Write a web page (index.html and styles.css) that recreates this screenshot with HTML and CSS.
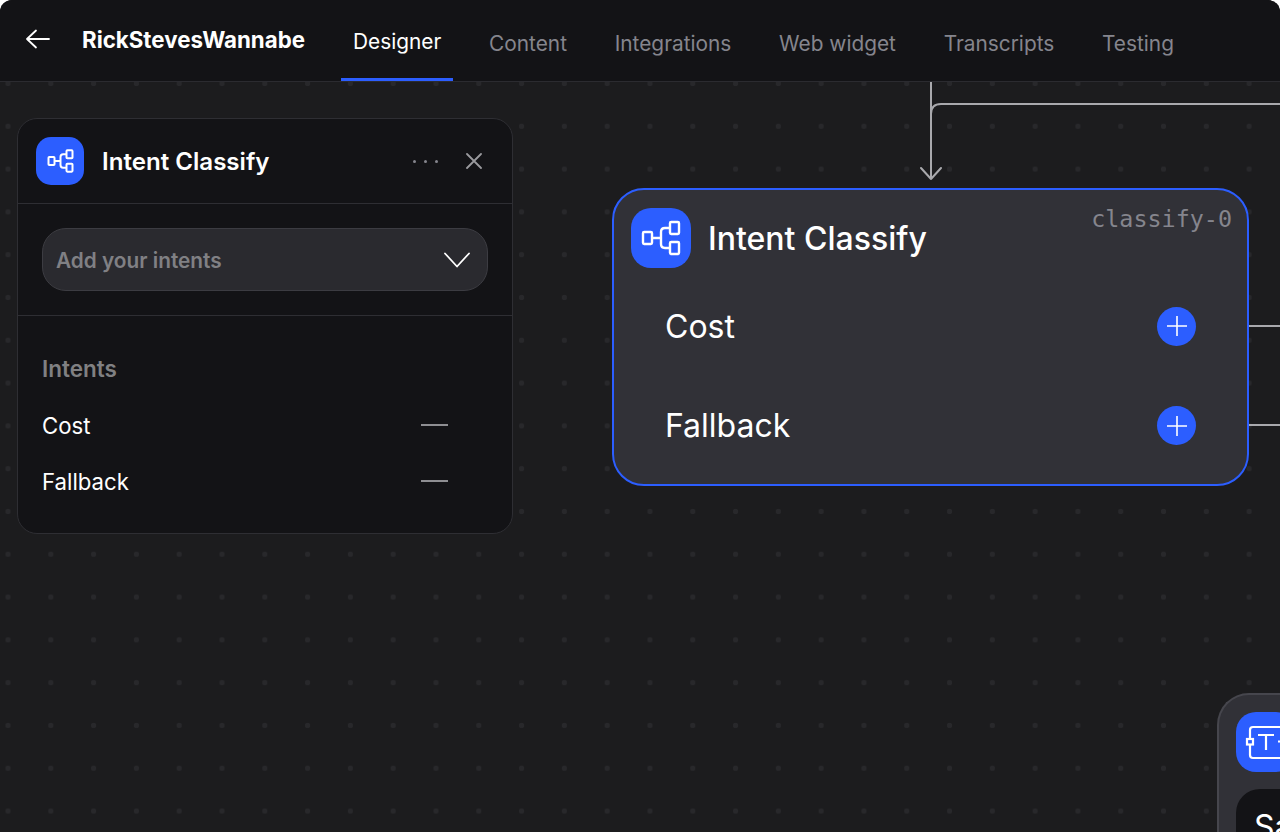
FILE: index.html
```html
<!DOCTYPE html>
<html lang="en">
<head>
<meta charset="utf-8">
<title>RickStevesWannabe - Designer</title>
<link rel="stylesheet" href="styles.css">
</head>
<body>
<div class="app">
  <header class="topbar">
    <button class="back" aria-label="Back">
      <svg width="26" height="22" viewBox="0 0 26 22" fill="none" stroke="#fff" stroke-width="1.8" stroke-linecap="round" stroke-linejoin="round"><path d="M2 11H24M11 2.5 2 11l9 8.5"/></svg>
    </button>
    <div class="project">RickStevesWannabe</div>
    <nav class="tabs">
      <a class="tab active">Designer</a>
      <a class="tab">Content</a>
      <a class="tab">Integrations</a>
      <a class="tab">Web widget</a>
      <a class="tab">Transcripts</a>
      <a class="tab">Testing</a>
    </nav>
  </header>
  <main class="canvas">
    <svg class="edges" width="1280" height="750" viewBox="0 0 1280 750" fill="none" stroke="#a9a9ad" stroke-width="2">
      <path d="M1280 22H941Q931 22 931 32"/>
      <path d="M931 0V97M921 86l10 11 10-11" stroke-linecap="round" stroke-linejoin="round"/>
      <path d="M1249 244H1280M1249 343H1280"/>
    </svg>

    <section class="node classify">
      <div class="node-head">
        <span class="icon icon-lg">
          <svg width="40" height="36" viewBox="0 0 40 36" fill="none" stroke="#fff" stroke-width="2.400" stroke-linejoin="round"><rect x="2" y="12" width="9" height="12" rx="1.200"/><rect x="29" y="2" width="9" height="12" rx="1.200"/><rect x="29" y="22" width="9" height="12" rx="1.200"/><path d="M11 18H20M29 8H24Q20 8 20 12V24Q20 28 24 28H29"/></svg>
        </span>
        <h2 class="node-title">Intent Classify</h2>
        <span class="node-id">classify-0</span>
      </div>
      <div class="node-row"><span>Cost</span><span class="plus"><svg width="20" height="20" viewBox="0 0 20 20" stroke="#fff" stroke-width="1.600"><path d="M0 10H20M10 0V20"/></svg></span></div>
      <div class="node-row"><span>Fallback</span><span class="plus"><svg width="20" height="20" viewBox="0 0 20 20" stroke="#fff" stroke-width="1.600"><path d="M0 10H20M10 0V20"/></svg></span></div>
    </section>

    <section class="node text-node">
      <div class="text-head">
        <span class="icon icon-lg">
          <svg width="60" height="60" viewBox="0 0 60 60" fill="none" stroke="#fff" stroke-width="2.200"><path d="M14 26V18Q14 15 17 15H60M14 33V43Q14 46 17 46H60M42 29.500H60M22 23H38M30 23V38"/><rect x="11" y="27" width="6" height="5.500"/></svg>
        </span>
      </div>
      <div class="text-pill">Say</div>
    </section>

    <aside class="panel">
      <div class="panel-head">
        <span class="icon icon-sm">
          <svg width="27" height="24" viewBox="0 0 40 36" fill="none" stroke="#fff" stroke-width="3" stroke-linejoin="round"><rect x="2" y="12" width="9" height="12" rx="1.200"/><rect x="29" y="2" width="9" height="12" rx="1.200"/><rect x="29" y="22" width="9" height="12" rx="1.200"/><path d="M11 18H20M29 8H24Q20 8 20 12V24Q20 28 24 28H29"/></svg>
        </span>
        <h2 class="panel-title">Intent Classify</h2>
        <span class="dots"><i></i><i></i><i></i></span>
        <svg class="close" width="16" height="16" viewBox="0 0 16 16" stroke="#9a9a9e" stroke-width="1.800" stroke-linecap="round"><path d="M1 1 15 15M15 1 1 15"/></svg>
      </div>
      <div class="panel-select">
        <div class="select">
          <span class="select-label">Add your intents</span>
          <svg width="26" height="16" viewBox="0 0 26 16" fill="none" stroke="#fff" stroke-width="1.800" stroke-linecap="round" stroke-linejoin="round"><path d="M1 1.500 13 14.500 25 1.500"/></svg>
        </div>
      </div>
      <div class="panel-list">
        <h3 class="list-title">Intents</h3>
        <div class="list-row"><span>Cost</span><i class="dash"></i></div>
        <div class="list-row"><span>Fallback</span><i class="dash"></i></div>
      </div>
    </aside>
  </main>
</div>
</body>
</html>
```
FILE: styles.css
```css
* { box-sizing: border-box; }
html, body { margin: 0; height: 100%; background: #fff; overflow: hidden; }
body { font-family: Inter, "Noto Sans", sans-serif; color: #fff; }
h2, h3 { margin: 0; }

.app {
  width: 1280px;
  height: 832px;
  display: flex;
  flex-direction: column;
  border-radius: 12px 12px 0 0;
  overflow: hidden;
  background: #1c1c1e;
}

.topbar {
  flex: none;
  height: 82px;
  display: flex;
  align-items: stretch;
  background: #131316;
  border-bottom: 1px solid #2b2b30;
  padding-left: 25px;
}
.back {
  width: 26px;
  padding: 0;
  border: 0;
  background: none;
  display: flex;
  align-items: center;
  margin-bottom: 3px;
}
.project {
  margin-left: 31px;
  align-self: center;
  margin-bottom: 3px;
  font-size: 22.300px;
  font-weight: 700;
}
.tabs { display: flex; margin-left: 36px; }
.tab {
  display: flex;
  align-items: center;
  padding: 8px 12px 0;
  margin-right: 23.700px;
  font-size: 20.850px;
  color: #85858d;
  border-bottom: 3px solid transparent;
}
.tab.active { padding-top: 4px; color: #fff; border-bottom-color: #2c5eff; }

.canvas {
  position: relative;
  flex: 1;
  overflow: hidden;
  background-color: #1c1c1e;
  background-image: radial-gradient(circle, #28282b 2.500px, transparent 3px);
  background-size: 42.800px 42.800px;
  background-position: -13.400px -19.900px;
}
.edges { position: absolute; left: 0; top: 0; }

.icon {
  flex: none;
  display: flex;
  align-items: center;
  justify-content: center;
  background: #2c5eff;
}
.icon-lg { width: 60px; height: 60px; border-radius: 20px; }
.icon-sm { width: 48px; height: 48px; border-radius: 15px; }

.node {
  position: absolute;
  background: #313137;
  border-radius: 32px;
}
.classify {
  left: 612px;
  top: 106px;
  width: 637px;
  height: 298px;
  border: 2px solid #2c5eff;
  padding: 18px 17px;
}
.node-head { display: flex; align-items: center; position: relative; height: 60px; }
.node-title { margin-left: 17px; font-size: 32px; font-weight: 500; }
.node-id {
  position: absolute;
  right: -2px;
  top: -3px;
  font-family: "DejaVu Sans Mono", "Liberation Mono", monospace;
  font-size: 23.400px;
  color: #85858d;
}
.node-row {
  display: flex;
  align-items: center;
  justify-content: space-between;
  height: 99.500px;
  padding: 0 34px;
  font-size: 32px;
}
.node-head + .node-row { margin-top: 8.500px; }
.plus {
  width: 39px;
  height: 39px;
  border-radius: 50%;
  background: #2c5eff;
  display: flex;
  align-items: center;
  justify-content: center;
}

.text-node {
  left: 1217px;
  top: 611px;
  width: 300px;
  height: 300px;
  border: 2px solid #46464d;
  border-right: 0;
  padding: 17px;
}
.text-pill {
  margin-top: 17px;
  height: 120px;
  border-radius: 24px;
  background: #131316;
  padding: 18px;
  font-size: 32px;
}

.panel {
  position: absolute;
  left: 17px;
  top: 36px;
  width: 496px;
  height: 416px;
  background: #131316;
  border: 1px solid #2e2e33;
  border-radius: 20px;
}
.panel-head {
  display: flex;
  align-items: center;
  height: 85px;
  padding: 0 30px 0 18px;
  border-bottom: 1px solid #2e2e33;
}
.panel-title { margin-left: 18px; flex: 1; font-size: 24.100px; font-weight: 600; }
.dots { display: flex; gap: 8px; margin-right: 28px; }
.dots i { width: 3px; height: 3px; border-radius: 50%; background: #85858d; }
.panel-select {
  height: 112px;
  padding: 24px 24px 0;
  border-bottom: 1px solid #2e2e33;
}
.select {
  height: 63px;
  display: flex;
  align-items: center;
  justify-content: space-between;
  padding: 0 17px 0 13px;
  background: #2a2a2f;
  border: 1px solid #3c3c42;
  border-radius: 24px;
  font-size: 20.800px;
  font-weight: 600;
  color: #808084;
}
.select-label { padding-top: 2px; }
.panel-list { padding: 40px 24px 0; }
.list-title { font-size: 22.500px; font-weight: 600; color: #808082; height: 26px; line-height: 26px; }
.list-row {
  display: flex;
  align-items: center;
  justify-content: space-between;
  height: 56px;
  font-size: 22.200px;
  padding-right: 40px;
}
.list-title + .list-row { margin-top: 15px; }
.dash { width: 27px; height: 2px; background: #8e8e92; }
```
